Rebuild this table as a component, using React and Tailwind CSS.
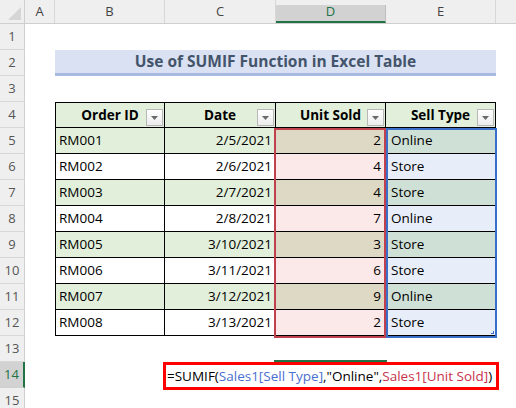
import React from "react";

const rows = [
  ["RM001", "2/5/2021", 2, "Online"],
  ["RM002", "2/6/2021", 4, "Store"],
  ["RM003", "2/7/2021", 4, "Store"],
  ["RM004", "2/8/2021", 7, "Online"],
  ["RM005", "3/10/2021", 3, "Store"],
  ["RM006", "3/11/2021", 6, "Store"],
  ["RM007", "3/12/2021", 9, "Online"],
  ["RM008", "3/13/2021", 2, "Store"],
];

function RowHead({ n, sel }) {
  return (
    <div
      className={
        "w-[25px] shrink-0 h-full flex items-center justify-center border-r border-b text-[13px] " +
        (sel
          ? "bg-[#d2d2d2] text-[#217346] border-r-[#217346] border-r-2 border-b-[#d0d0d0]"
          : "bg-[#efefef] text-[#555] border-r-[#cfcfcf] border-b-[#d8d8d8]")
      }
    >
      {n}
    </div>
  );
}

function FilterBtn() {
  return (
    <div className="absolute right-[1px] top-[6px] w-[17px] h-[17px] border border-[#b8b8b8] bg-gradient-to-b from-white to-[#ececec] flex items-center justify-center">
      <svg width="7" height="4" viewBox="0 0 7 4">
        <polygon points="0,0 7,0 3.5,4" fill="#6a6a6a" />
      </svg>
    </div>
  );
}

function HeadCell({ w, label, first }) {
  return (
    <div
      className={
        "relative h-full bg-[#e2efda] border-t border-r border-b border-black flex items-center justify-center font-bold text-[13.5px] text-black " +
        w +
        (first ? " border-l" : "")
      }
    >
      <span className="pt-[1px]">{label}</span>
      <FilterBtn />
    </div>
  );
}

export default function App() {
  return (
    <div className="relative w-[516px] h-[408px] bg-white overflow-hidden font-['Open_Sans',sans-serif] text-black">
      {/* column header row */}
      <div className="flex h-[24px] bg-[#efefef] border-b border-[#cfcfcf] text-[13px] text-[#444]">
        <div className="relative w-[25px] shrink-0 border-r border-[#cfcfcf]">
          <svg className="absolute right-[3px] bottom-[3px]" width="13" height="13" viewBox="0 0 13 13">
            <polygon points="13,0 13,13 0,13" fill="#d6d6d6" />
          </svg>
        </div>
        <div className="w-[30px] shrink-0 border-r border-[#d8d8d8] flex items-center justify-center">A</div>
        <div className="w-[110px] shrink-0 border-r border-[#d8d8d8] flex items-center justify-center">B</div>
        <div className="w-[111px] shrink-0 border-r border-[#d8d8d8] flex items-center justify-center">C</div>
        <div className="w-[110px] shrink-0 bg-[#d2d2d2] text-[#217346] border-b-2 border-[#217346] border-r border-r-[#bdbdbd] flex items-center justify-center mt-[5px] pb-[3px]">D</div>
        <div className="w-[110px] shrink-0 border-r border-[#d8d8d8] flex items-center justify-center">E</div>
        <div className="flex-1" />
      </div>

      {/* row 1 */}
      <div className="flex h-[26px]"><RowHead n={1} /></div>
      {/* row 2 title */}
      <div className="flex h-[26px]">
        <RowHead n={2} />
        <div className="w-[30px] shrink-0" />
        <div className="w-[441px] shrink-0 h-full bg-[#d9e1f2] border-b-[3px] border-[#a7bbe0] flex items-center justify-center font-bold text-[15.5px] text-[#44546a]">
          Use of SUMIF Function in Excel Table
        </div>
      </div>
      {/* row 3 */}
      <div className="flex h-[26px]"><RowHead n={3} /></div>
      {/* row 4 header */}
      <div className="flex h-[26px]">
        <RowHead n={4} />
        <div className="w-[30px] shrink-0" />
        <HeadCell w="w-[110px]" label="Order ID" first />
        <HeadCell w="w-[111px]" label="Date" />
        <HeadCell w="w-[110px]" label="Unit Sold" />
        <HeadCell w="w-[110px]" label="Sell Type" />
      </div>
      {rows.map((r, i) => {
        const odd = i % 2 === 0;
        return (
          <div key={i} className="flex h-[26px] text-[13.5px]">
            <RowHead n={5 + i} />
            <div className="w-[30px] shrink-0" />
            <div className={"w-[110px] h-full border-l border-r border-b border-black flex items-center pl-[3px] " + (odd ? "bg-[#e2efda]" : "bg-white")}>
              {r[0]}
            </div>
            <div className={"w-[111px] h-full border-r border-b border-black flex items-center justify-end pr-[3px] " + (odd ? "bg-[#e2efda]" : "bg-white")}>
              {r[1]}
            </div>
            <div className={"w-[110px] h-full border-r border-b border-black flex items-center justify-end pr-[4px] " + (odd ? "bg-[#ddd9c4]" : "bg-[#fbe9e9]")}>
              {r[2]}
            </div>
            <div className={"w-[110px] h-full border-r border-b border-black flex items-center pl-[5px] " + (odd ? "bg-[#cfe0d6]" : "bg-[#e8eef9]")}>
              {r[3]}
            </div>
          </div>
        );
      })}
      <div className="flex h-[26px]"><RowHead n={13} /></div>
      <div className="flex h-[26px]"><RowHead n={14} sel /></div>
      <div className="flex h-[26px]"><RowHead n={15} /></div>

      {/* range highlight overlays */}
      <div className="absolute left-[274px] top-[128px] w-[112px] h-[210px] border-2 border-[#c0404d]" />
      <div className="absolute left-[386px] top-[128px] w-[111px] h-[210px] border-2 border-[#3a6fc9]" />
      <div className="absolute left-[491px] top-[331px] w-[3px] h-[3px] border-r border-b border-[#3a6fc9]" />

      {/* selected cell top border */}
      <div className="absolute left-[274px] top-[360px] w-[113px] h-[2px] bg-[#217346]" />

      {/* formula box */}
      <div className="absolute left-[163px] top-[362px] w-[336px] h-[28px] border-[3px] border-[#ff0000] bg-white flex items-center pl-[1px] text-[13.5px] whitespace-nowrap">
        <span className="text-black">=SUMIF(</span>
        <span className="text-[#4a6fd0]">Sales1[Sell Type]</span>
        <span className="text-black">,"Online",</span>
        <span className="text-[#c8324a]">Sales1[Unit Sold]</span>
        <span className="text-black">)</span>
      </div>
    </div>
  );
}
